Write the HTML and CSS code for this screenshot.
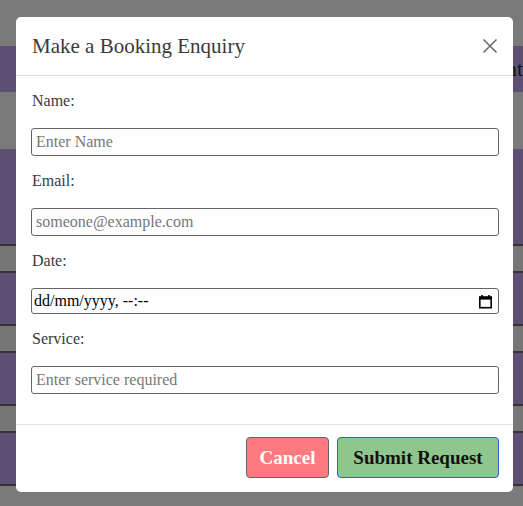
FILE: index.html
```html
<!DOCTYPE html>
<html lang="en-GB">
<head>
<meta charset="utf-8">
<title>Booking</title>
<link rel="stylesheet" href="styles.css">
</head>
<body>
<div class="page">
  <div class="spacer-top"></div>
  <div class="table-head"><span class="head-text">Appointment</span></div>
  <div class="spacer-mid"></div>
  <div class="row purple tall"></div>
  <div class="row gray"></div>
  <div class="row purple"></div>
  <div class="row gray"></div>
  <div class="row purple"></div>
  <div class="row gray"></div>
  <div class="row purple"></div>
</div>

<div class="modal">
  <div class="modal-header">
    <h5 class="modal-title">Make a Booking Enquiry</h5>
    <button class="close" aria-label="Close">
      <svg width="16" height="16" viewBox="0 0 16 16"><path d="M1.5 1.5 L14.5 14.5 M14.5 1.5 L1.5 14.5" stroke="#6c6c6c" stroke-width="1.6" fill="none"/></svg>
    </button>
  </div>
  <div class="modal-body">
    <div class="group">
      <label class="label">Name:</label>
      <input class="field" type="text" placeholder="Enter Name">
    </div>
    <div class="group">
      <label class="label">Email:</label>
      <input class="field" type="email" placeholder="someone@example.com">
    </div>
    <div class="group">
      <label class="label">Date:</label>
      <div class="field date">
        <span class="date-text">dd/mm/yyyy, --:--</span>
        <svg class="cal" width="15" height="15" viewBox="0 0 15 15"><path d="M4 1v2.5M11 1v2.5" stroke="#000" stroke-width="1.6"/><rect x="1.8" y="3" width="11.4" height="10.7" fill="none" stroke="#000" stroke-width="1.6"/><rect x="1.8" y="3" width="11.4" height="2.6" fill="#000"/></svg>
      </div>
    </div>
    <div class="group">
      <label class="label">Service:</label>
      <input class="field" type="text" placeholder="Enter service required">
    </div>
  </div>
  <div class="modal-footer">
    <button class="btn cancel">Cancel</button>
    <button class="btn submit">Submit Request</button>
  </div>
</div>
</body>
</html>
```

FILE: styles.css
```css
html, body {
  margin: 0;
  padding: 0;
}
body {
  background: #7a7a7a;
  font-family: "Liberation Serif", "DejaVu Serif", serif;
  width: 523px;
  height: 506px;
  overflow: hidden;
}
.page {
  display: flex;
  flex-direction: column;
}
.spacer-top { height: 46px; }
.table-head {
  height: 46px;
  background: #5e5072;
  display: flex;
  align-items: center;
  justify-content: flex-end;
  font-size: 22px;
  color: #141414;
  white-space: nowrap;
}
.spacer-mid { height: 57px; }
.row {
  border-bottom: 2px solid #333;
}
.row.purple { background: #5e5072; height: 51px; }
.row.purple.tall { height: 95px; }
.row.gray { background: #777; height: 25px; }

.modal {
  position: fixed;
  left: 16px;
  top: 17px;
  width: 497px;
  background: #fff;
  border-radius: 5px;
  color: #3a3a3a;
}
.modal-header {
  display: flex;
  align-items: center;
  justify-content: space-between;
  padding: 16px 15px 16px 16px;
  border-bottom: 1px solid #dcdcdc;
}
.modal-title {
  margin: 0;
  font-size: 21px;
  font-weight: normal;
  line-height: 26px;
  color: #3a3a3a;
}
.close {
  border: 0;
  background: none;
  padding: 0;
  width: 16px;
  height: 16px;
  display: flex;
}
.modal-body {
  padding: 16px 14px 14px 15px;
}
.group {
  display: flex;
  flex-direction: column;
  margin-bottom: 16px;
}
.label {
  font-size: 16px;
  line-height: 18px;
  margin: 0 0 18px 1px;
  color: #3a3a3a;
}
.field {
  box-sizing: border-box;
  height: 28px;
  border: 1px solid #666;
  border-radius: 3px;
  padding: 0 4px;
  font-family: "Liberation Serif", "DejaVu Serif", serif;
  font-size: 16px;
  color: #000;
  background: #fff;
  margin: 0;
}
.field::placeholder { color: #777; }
.field.date {
  height: 26px;
  padding: 0 5px 0 2px;
  display: flex;
  align-items: center;
  justify-content: space-between;
}
.date-text {
  font-size: 16px;
  color: #000;
}
.cal { display: block; }
.modal-footer {
  display: flex;
  justify-content: flex-end;
  gap: 8px;
  padding: 12px 14px 14px 16px;
  border-top: 1px solid #dee2e6;
}
.btn {
  height: 41px;
  border-radius: 4px;
  font-family: "Liberation Serif", "DejaVu Serif", serif;
  font-weight: bold;
  font-size: 19px;
  padding: 0 10px;
}
.cancel {
  width: 83px;
  background: #ff7a7f;
  border: 1px solid #666;
  color: #fff;
}
.submit {
  width: 162px;
  background: #8fc68e;
  border: 1px solid #1f62e6;
  color: #111;
}
```
